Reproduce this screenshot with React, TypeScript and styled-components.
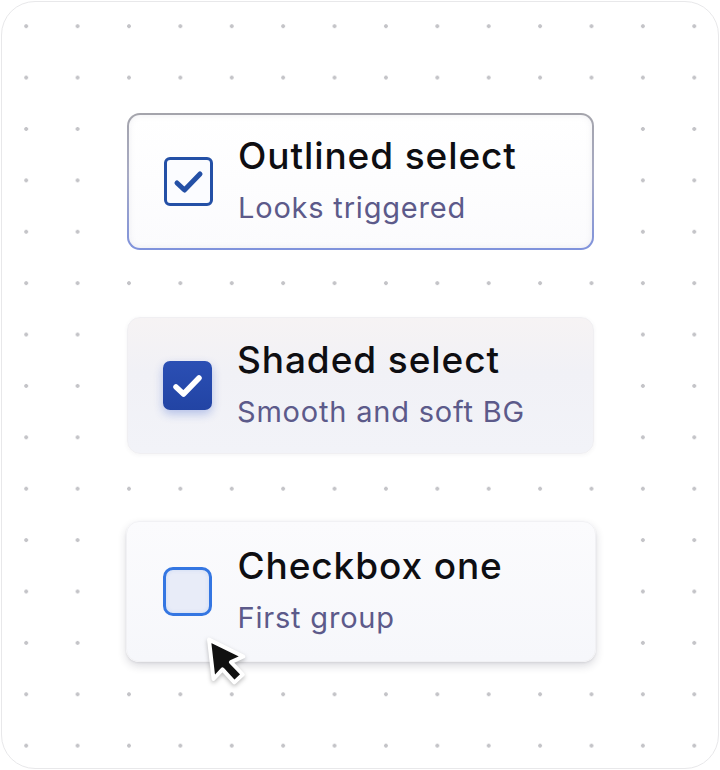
import React from "react";
import styled, { createGlobalStyle } from "styled-components";

const Global = createGlobalStyle`
  html, body { margin: 0; padding: 0; background: #ffffff; }
  body { font-family: Inter, "Noto Sans", sans-serif; }
`;

const Frame = styled.div`
  box-sizing: border-box;
  width: 718px;
  height: 768px;
  margin: 1px;
  border: 1.5px solid #e8e8ea;
  border-radius: 34px;
  background-color: #ffffff;
  background-image: radial-gradient(circle, #c4c4c8 1.6px, transparent 2.2px);
  background-size: 51.4px 51.4px;
  background-position: -1.5px -1.5px;
  display: flex;
  flex-direction: column;
  align-items: center;
  padding-top: 111px;
  gap: 67px;
`;

type Variant = "outlined" | "shaded" | "plain";

const Card = styled.div<{ $variant: Variant }>`
  position: relative;
  box-sizing: border-box;
  width: ${(p) => (p.$variant === "plain" ? 470 : 467)}px;
  height: ${(p) => (p.$variant === "plain" ? 141 : 137)}px;
  margin-left: 1px;
  border-radius: 13px;
  display: flex;
  align-items: center;
  padding-left: ${(p) => (p.$variant === "plain" ? 36 : 35)}px;
  gap: ${(p) => (p.$variant === "plain" ? 26 : 25)}px;
  ${(p) =>
    p.$variant === "outlined"
      ? `
    border: 2px solid transparent;
    background:
      linear-gradient(180deg, #ffffff 0%, #fbfbfd 100%) padding-box,
      linear-gradient(180deg, #a4a4ab 0%, #a7aac4 45%, #7f92dc 100%) border-box;
    box-shadow: inset 0 0 6px rgba(120, 120, 150, 0.12);
  `
      : p.$variant === "shaded"
      ? `
    border: 1px solid #f0eff2;
    background: linear-gradient(180deg, #f6f3f4 0%, #f1f1f6 40%, #f2f3f8 100%);
    box-shadow: 0 1px 4px rgba(60, 60, 90, 0.06);
  `
      : `
    border: 1px solid #f1f1f4;
    background: linear-gradient(180deg, #fbfbfd 0%, #f6f7fb 100%);
    box-shadow: 0 4px 8px rgba(40, 40, 60, 0.16), 0 1px 2px rgba(40, 40, 60, 0.08);
  `}
`;

const Box = styled.div<{ $variant: Variant }>`
  box-sizing: border-box;
  width: 49px;
  height: 49px;
  flex: none;
  display: flex;
  align-items: center;
  justify-content: center;
  ${(p) =>
    p.$variant === "outlined"
      ? `
    border: 3px solid #2450a6;
    border-radius: 6px;
    background: #fbfcff;
  `
      : p.$variant === "shaded"
      ? `
    border-radius: 7px;
    background: linear-gradient(180deg, #2b4fb4 0%, #2244a4 100%);
    box-shadow: 0 4px 10px rgba(40, 80, 200, 0.3);
  `
      : `
    border: 3px solid #3476e2;
    border-radius: 10px;
    background: #e8ecf8;
    box-shadow: inset 0 0 4px rgba(52, 118, 226, 0.15);
  `}
`;

const TextCol = styled.div`
  display: flex;
  flex-direction: column;
  gap: 12px;
  margin-top: -4px;
`;

const Title = styled.div`
  font-family: Inter, "Noto Sans", sans-serif;
  font-size: 37px;
  line-height: 44px;
  font-weight: 500;
  color: #0e0e12;
  letter-spacing: 0.9px;
`;

const Sub = styled.div`
  font-family: Inter, "Noto Sans", sans-serif;
  font-size: 29px;
  line-height: 36px;
  font-weight: 400;
  color: #5c5a8a;
  letter-spacing: 0.8px;
`;

const Cursor = styled.svg`
  position: absolute;
  left: 74px;
  top: 112px;
  width: 52px;
  height: 54px;
  filter: drop-shadow(0 2px 2px rgba(0, 0, 0, 0.25));
`;

const Check: React.FC<{ color: string; width: number }> = ({ color, width }) => (
  <svg width="40" height="40" viewBox="0 0 40 40">
    <path
      d="M8 21 L15.5 28 L31 12"
      fill="none"
      stroke={color}
      strokeWidth={width}
      strokeLinecap="round"
      strokeLinejoin="round"
    />
  </svg>
);

const items: { variant: Variant; title: string; sub: string }[] = [
  { variant: "outlined", title: "Outlined select", sub: "Looks triggered" },
  { variant: "shaded", title: "Shaded select", sub: "Smooth and soft BG" },
  { variant: "plain", title: "Checkbox one", sub: "First group" },
];

export default function App() {
  return (
    <>
      <Global />
      <Frame>
        {items.map((it) => (
          <Card key={it.title} $variant={it.variant}>
            <Box $variant={it.variant}>
              {it.variant === "outlined" && <Check color="#2450a6" width={5} />}
              {it.variant === "shaded" && <Check color="#ffffff" width={5.5} />}
            </Box>
            <TextCol>
              <Title>{it.title}</Title>
              <Sub>{it.sub}</Sub>
            </TextCol>
            {it.variant === "plain" && (
              <Cursor viewBox="0 0 46 48">
                <path
                  d="M7 5 L11 40 L19 31.5 L29.5 43 L37 36 L26.5 25 L37.5 20 Z"
                  fill="#111"
                  stroke="#fff"
                  strokeWidth="3.5"
                  strokeLinejoin="round"
                />
              </Cursor>
            )}
          </Card>
        ))}
      </Frame>
    </>
  );
}
